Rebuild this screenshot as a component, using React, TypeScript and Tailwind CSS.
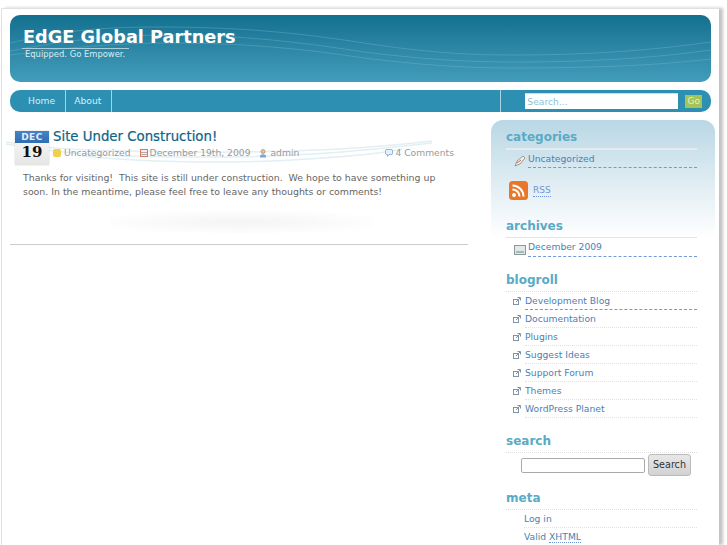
import { ReactNode } from 'react'

const blogroll = ['Development Blog', 'Documentation', 'Plugins', 'Suggest Ideas', 'Support Forum', 'Themes', 'WordPress Planet']

function HeaderWaves() {
    return (
        <svg className="absolute inset-0 w-full h-full" viewBox="0 0 701 67" preserveAspectRatio="none" fill="none" stroke="#8cc6d8" strokeOpacity="0.3">
            <path d="M0 28 C60 14 100 12 150 12 C230 12 290 18 354 28 C420 38 460 40 504 40 C590 40 650 34 701 27" />
            <path d="M0 36 C60 24 110 20 160 20 C230 20 290 27 354 37 C420 45 460 47 504 47 C590 47 650 42 701 35" />
            <path d="M0 40 C60 32 110 28 160 28 C230 28 290 33 354 43 C420 51 460 53 504 53 C590 53 650 50 701 44" />
        </svg>
    )
}

function PostWaves() {
    return (
        <svg className="absolute left-0 top-[131px] w-[432px] h-[30px] z-0" viewBox="0 0 432 30" fill="none" stroke="#e2eff3" strokeWidth="1.5">
            <path d="M4 2 C40 8 70 10 130 11 C220 14 340 12 430 1" />
            <path d="M4 4 C60 14 110 17 190 17 C280 18 350 12 430 3" />
            <path d="M80 16 C140 22 220 24 290 20 C340 17 380 14 400 9" />
        </svg>
    )
}

function Heading({ children }: { children: ReactNode }) {
    return <h3 className="text-[12px] leading-[16px] font-bold text-[#5aaac6] pb-[3px]">{children}</h3>
}

function LinkIcon() {
    return (
        <svg className="w-[8px] h-[8px] shrink-0" viewBox="0 0 8 8" fill="none" stroke="#7f95a6" strokeWidth="1">
            <rect x="0.5" y="2.5" width="5" height="5" />
            <path d="M3 5 L7 1 M4.5 0.5 H7.5 V3.5" />
        </svg>
    )
}

export default function App() {
    return (
        <div className="h-[545px] w-[727px] overflow-hidden bg-white text-[9.2px] text-[#666] [font-family:'DejaVu_Sans',sans-serif]">
            <div className="relative mt-[8px] ml-px w-[718px] h-[537px] border-t border-l border-[#e3e0dd] bg-white pl-[8px] pt-[6px] shadow-[4px_0_3px_#c4c4c4]">
                {/* Header */}
                <div className="relative w-[701px] h-[67px] rounded-[10px] overflow-hidden bg-gradient-to-b from-[#12708f] to-[#429dbb]">
                    <HeaderWaves />
                    <div className="relative pl-[13px] pt-[11px]">
                        <h1 className="text-[17.7px] leading-[22px] font-bold text-white">EdGE Global Partners</h1>
                        <div className="w-[107px] -ml-px border-t border-[#a4d0de]" />
                        <p className="pl-[2px] text-[8.4px] leading-[10px] text-[#dcedf3]">Equipped. Go Empower.</p>
                    </div>
                </div>

                {/* Nav */}
                <div className="flex items-stretch w-[701px] h-[22px] mt-[8px] rounded-[10px] bg-[#2d90b3] text-[#d9edf4]">
                    <a className="pl-[18px] pr-[10px] leading-[22px] border-r border-[#a8d3e0]">Home</a>
                    <a className="pl-[8px] pr-[10px] leading-[22px] border-r border-[#a8d3e0]">About</a>
                    <div className="w-[389px] border-r border-[#a8d3e0]" />
                    <div className="flex items-center pl-[24px] gap-[7px]">
                        <div className="w-[153px] h-[16px] bg-white pl-[2px] leading-[15px] text-[#8cc2d6] border-t border-[#d8d8d8]">Search...</div>
                        <div className="w-[17px] h-[13px] bg-[#a3c456] text-center text-[9px] leading-[13px] text-[#e4f0c4]">Go</div>
                    </div>
                </div>

                {/* Main */}
                <div className="relative z-10 flex mt-[8px]">
                    <div className="w-[458px] shrink-0 pt-[11px]">
                        <div className="flex pl-[5px]">
                            <div className="w-[34px] h-[34px] bg-gradient-to-b from-[#fafafa] to-[#e6e6e4] shadow-[0_0_1px_#aaa]">
                                <div className="h-[12px] bg-gradient-to-b from-[#4684c8] to-[#2f6cb0] text-center text-[9px] leading-[12px] font-bold text-[#e6eef8] tracking-[0.5px]">DEC</div>
                                <div className="text-center text-[15px] leading-[18px] font-bold text-[#111] [font-family:'DejaVu_Serif',serif]">19</div>
                            </div>
                            <div className="pl-[4px]">
                                <h2 className="text-[13.3px] leading-[12px] text-[#0d6487] font-normal [-webkit-text-stroke:0.2px_#0d6487]">Site Under Construction!</h2>
                                <div className="flex items-center w-[401px] h-[14px] mt-[3px] text-[#999] whitespace-nowrap">
                                    <span className="w-[8px] h-[8px] rounded-[2px] bg-[#f2cf4a] mr-[3px]" />
                                    <span>Uncategorized</span>
                                    <svg className="w-[8px] h-[8px] ml-[9px] mr-[2px]" viewBox="0 0 8 8"><rect x="0.5" y="0.5" width="7" height="7" fill="#fbeee8" stroke="#d77a5f" /><path d="M1 3.5 H7 M1 5.5 H7" stroke="#b7a9a9" /></svg>
                                    <span>December 19th, 2009</span>
                                    <svg className="w-[8px] h-[9px] ml-[9px] mr-[3px]" viewBox="0 0 8 9"><circle cx="4" cy="2.5" r="2" fill="#e9c39c" stroke="#8f7a5f" strokeWidth="0.6" /><path d="M1 8.5 V6.5 Q4 4 7 6.5 V8.5 Z" fill="#7ba7d6" /></svg>
                                    <span>admin</span>
                                    <span className="flex-1" />
                                    <svg className="w-[8px] h-[8px] mr-[2px]" viewBox="0 0 8 8"><path d="M1 0.5 H7 L7.5 1 V5 L7 5.5 H4 L2.5 7.5 V5.5 H1 L0.5 5 V1 Z" fill="#e5f0fa" stroke="#7aa6d8" strokeWidth="0.8" /></svg>
                                    <span>4 Comments</span>
                                </div>
                            </div>
                        </div>
                        <p className="pl-[13px] pt-[6px] text-[9.4px] leading-[14px] text-[#666] whitespace-pre">
                            {'Thanks for visiting!  This site is still under construction.  We hope to have something up\nsoon. In the meantime, please feel free to leave any thoughts or comments!'}
                        </p>
                        <div className="ml-[100px] mt-[12px] h-[22px] w-[262px] bg-[radial-gradient(ellipse_at_center,#f4f4f4,#ffffff_85%)]" />
                        <div className="mt-[11px] border-t border-[#ccc]" />
                    </div>

                    {/* Sidebar */}
                    <div className="w-[224px] ml-[23px] shrink-0 rounded-t-[12px] bg-[linear-gradient(#b9d7e5,#e4eff4_70px,#ffffff_118px)] pl-[15px] pr-[18px] pt-[9px]">
                        <Heading>categories</Heading>
                        <div className="border-t-2 border-[#e6ecee]" />
                        <div className="pl-[8px] pt-[2px] flex items-start gap-[2px]">
                            <svg className="w-[12px] h-[12px] shrink-0 mt-[3px]" viewBox="0 0 12 12"><path d="M1 11 L3 6 L9 1 L11 3 L6 9 Z" fill="#f4efe6" stroke="#8a8474" strokeWidth="0.8" /><path d="M3 8 L7 5" stroke="#c66" /></svg>
                            <a className="flex-1 block leading-[14px] pb-[1px] text-[#4a7fb5] border-b border-dashed border-[#6f9bdc]">Uncategorized</a>
                        </div>
                        <div className="flex items-center mt-[13px] ml-[3px]">
                            <svg className="w-[19px] h-[19px]" viewBox="0 0 19 19">
                                <rect width="19" height="19" rx="3.5" fill="#e8772a" />
                                <circle cx="5" cy="14" r="2" fill="#fff" />
                                <path d="M3.5 8.5 A7 7 0 0 1 10.5 15.5 M3.5 4.5 A11 11 0 0 1 14.5 15.5" stroke="#fff" strokeWidth="2" fill="none" />
                            </svg>
                            <a className="ml-[5px] text-[9px] leading-[12px] text-[#6f94d8] border-b border-dotted border-[#6f94d8]">RSS</a>
                        </div>
                        <div className="mt-[18px]">
                            <Heading>archives</Heading>
                        </div>
                        <div className="border-t border-[#e3e3e3]" />
                        <div className="pl-[8px] pt-[2px] flex items-start gap-[2px]">
                            <svg className="w-[12px] h-[12px] shrink-0 mt-[4px]" viewBox="0 0 12 12"><rect x="0.5" y="1.5" width="11" height="9" fill="#dfe8ea" stroke="#8a9a9e" /><rect x="2" y="7" width="8" height="2" fill="#a9bba5" /></svg>
                            <a className="flex-1 block leading-[14px] pb-[2px] text-[#4a7fb5] border-b border-dashed border-[#6f9bdc]">December 2009</a>
                        </div>
                        <div className="mt-[15px]">
                            <Heading>blogroll</Heading>
                        </div>
                        <div className="border-t border-dotted border-[#ddd]" />
                        <ul className="pl-[7px]">
                            {blogroll.map((name, i) => (
                                <li key={name} className="flex items-center h-[18px] gap-[4px]">
                                    <LinkIcon />
                                    <a className={`flex-1 block leading-[17px] h-[18px] border-b text-[#4a7fb5] ${i === 0 ? 'border-dashed border-[#6f9bdc]' : 'border-dotted border-[#e2e2e2]'}`}>{name}</a>
                                </li>
                            ))}
                        </ul>
                        <div className="mt-[15px]">
                            <Heading>search</Heading>
                        </div>
                        <div className="border-t border-dotted border-[#ddd]" />
                        <div className="flex items-center pl-[15px] pt-[1px] gap-[3px]">
                            <div className="w-[124px] h-[15px] bg-white border border-[#aaa] rounded-[2px]" />
                            <button className="w-[43px] h-[22px] rounded-[3px] border border-[#bbb] bg-gradient-to-b from-[#e8e8e8] to-[#d2d2d2] text-[9.6px] text-[#333]">Search</button>
                        </div>
                        <div className="mt-[14px]">
                            <Heading>meta</Heading>
                        </div>
                        <div className="border-t border-dotted border-[#ddd]" />
                        <div className="pl-[18px] text-[#4a7fb5]">
                            <div className="h-[18px] leading-[18px] border-b border-dotted border-[#e2e2e2]">Log in</div>
                            <div className="h-[18px] leading-[18px]">Valid <span className="border-b border-dotted border-[#6f94d8]">XHTML</span></div>
                        </div>
                    </div>
                </div>
                <PostWaves />
            </div>
        </div>
    )
}
